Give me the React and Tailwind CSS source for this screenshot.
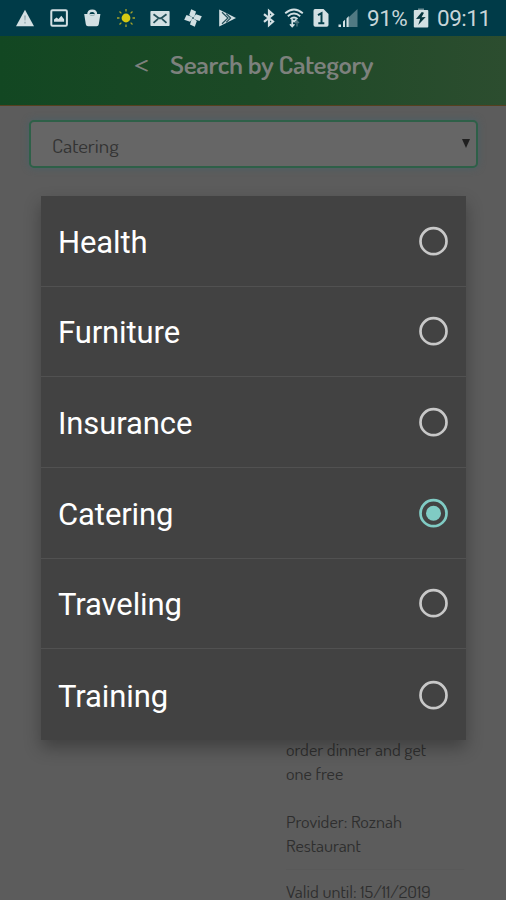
import React from "react";

const ICON = "#d3e0e3";

function Cell({ children }) {
  return (
    <span className="flex w-[33.7px] shrink-0 justify-center">
      <svg viewBox="0 0 20 20" className="h-5 w-5" fill={ICON}>
        {children}
      </svg>
    </span>
  );
}

const BLADE = "M10 10 6.200 7 8.200 1.200 13 3.500 11.600 8Z";

function Notifications() {
  return (
    <div className="flex w-[236px] shrink-0 items-center">
      <Cell>
        <path d="M10 1.8 19 18.2H1Z" />
        <path d="M9 7.5h2l-.4 5H9.4ZM9.2 13.8h1.6v1.7H9.2Z" fill="#9fb4b9" />
      </Cell>
      <Cell>
        <rect x="2.3" y="2.2" width="15.6" height="15.6" rx="1.2" fill="none" stroke={ICON} strokeWidth="2" />
        <path d="M5 13.8v-2.3l2.5-2 2 1.5 2.8-3.2 2.8 3.4v2.6Z" />
      </Cell>
      <Cell>
        <path d="M2.200 6h16.2l-1.6 10.2q-.3 2-2.200 2H6q-1.9 0-2.200-2Z" />
        <path d="M6.400 6.500q0-3.800 3.800-3.800T14 6.500" fill="none" stroke={ICON} strokeWidth="2.400" />
        <path d="M7.500 6.500Q8 7.500 10.200 7.500t2.700-1" fill="none" stroke="#87a0a5" strokeWidth=".8" />
      </Cell>
      <Cell>
        <circle cx="10" cy="10" r="4.4" fill="#d6c811" />
        <path d="M10 1v2.5M10 16.5V19M1 10h2.5M16.5 10H19M3.5 3.5l1.9 1.9M14.6 14.6l1.9 1.9M3.5 16.5l1.9-1.9M14.6 5.4l1.9-1.9" stroke="#a6a52a" strokeWidth="1.3" />
      </Cell>
      <Cell>
        <rect x=".4" y="3" width="19.2" height="15" rx=".8" />
        <path d="m3.500 6.300 4.700 3.500q1.800 1.300 3.600 0l4.700-3.500M3.500 14.800l4.500-4M16.500 14.800l-4.500-4" fill="none" stroke="#24515b" strokeWidth="1.8" />
      </Cell>
      <Cell>
        <path d={BLADE} />
        <path d={BLADE} transform="rotate(90 10 10)" />
        <path d={BLADE} transform="rotate(180 10 10)" />
        <path d={BLADE} transform="rotate(270 10 10)" />
        <circle cx="10" cy="10" r="1.1" fill="#4c717a" />
      </Cell>
      <Cell>
        <path d="M2.2 1.5 19 10 2.2 18.5Z" />
        <path d="M5 4.2 11 10l-6 5.8M9.2 5.6 13.6 10l-4.4 4.4" fill="none" stroke="#214e59" strokeWidth="1.2" />
      </Cell>
    </div>
  );
}

function StatusBar() {
  return (
    <div className="flex h-9 items-center bg-[#003b48] pl-[8px] font-['Roboto',sans-serif] text-[22.5px] leading-9 tracking-[-0.5px] text-[#c8d5d8]">
      <Notifications />
      <svg viewBox="0 0 14 20" className="ml-[18px] h-5 w-3.5 shrink-0">
        <path d="m2 6.200 9 7.300L7 17V3l4 3.500-9 7.300" fill="none" stroke={ICON} strokeWidth="2.2" />
      </svg>
      <svg viewBox="0 0 20 20" className="ml-[8px] h-5 w-5 shrink-0" fill="none" stroke={ICON} strokeWidth="1.8">
        <path d="M1.2 5.2Q10-2.3 18.8 5.2M3.8 8.2Q10 2.8 16.2 8.2M6.5 11Q10 8 13.5 11" />
        <path d="m7.5 11.5 2.5 2 2.5-2" />
        <path d="M8.2 13v5.5M6 16.2l2.2 2.3 2.2-2.3" strokeWidth="1.6" />
        <path d="M13 18.5V13m-2 2 2-2 2 2" stroke="#52777f" strokeWidth="1.3" />
      </svg>
      <svg viewBox="0 0 16 20" className="ml-[9px] h-5 w-4 shrink-0">
        <path d="M2 1h8.5L15.5 6v11q0 1.8-1.8 1.8H2.3Q.5 18.8.5 17V2.700Q.5 1 2 1Z" fill={ICON} />
        <path d="m5 7.2 3.5-2v10.300M5.300 15.200h6" fill="none" stroke="#063f4b" strokeWidth="2" />
      </svg>
      <svg viewBox="0 0 20 20" className="ml-[9px] h-5 w-5 shrink-0">
        <path d="M10.5 9.5 19.5 1v18h-9Z" fill="#517a83" />
        <path d="M.5 16.5H3V19H.5ZM5 13.5l2-1.8V19H5ZM8.500 10.500 10.700 8v11H8.500Z" fill={ICON} />
      </svg>
      <span className="ml-[9px] w-[43px] shrink-0 whitespace-nowrap">91%</span>
      <svg viewBox="0 0 16 22" className="ml-[3px] mb-px h-[22px] w-4 shrink-0">
        <path d="M5 1.500h6V3H5Z" fill="#6e8e95" />
        <rect x=".8" y="3" width="14.5" height="17.5" rx="1" fill={ICON} />
        <path d="M8.800 5 3 12l4.200-.3L5.200 18l7.500-8-4.200.3L11 5.700Z" fill="#07363f" />
      </svg>
      <span className="ml-[8px] whitespace-nowrap">09:11</span>
    </div>
  );
}

const options = ["Health", "Furniture", "Insurance", "Catering", "Traveling", "Training"];

function CategoryMenu() {
  return (
    <div role="radiogroup" className="absolute top-[196px] left-[41px] grid h-[544px] w-[425px] grid-rows-6 bg-[#424242] shadow-[0_8px_16px_0_rgba(0,0,0,0.3)]">
      {options.map((name) => {
        const selected = name === "Catering";
        return (
          <div key={name} role="radio" aria-checked={selected} className="flex items-center justify-between border-b border-[#515151] pr-[17px] pl-[17px] last:border-b-0">
            <span className="pt-[4px] font-['Roboto',sans-serif] text-[31px] leading-9 tracking-[-0.1px] text-white">{name}</span>
            <svg viewBox="0 0 30 30" className="h-[30px] w-[30px]" fill="none">
              <circle cx="14.500" cy="15.200" r="13" stroke={selected ? "#80cbc4" : "#c8c8c8"} strokeWidth="2.7" />
              {selected && <circle cx="14.500" cy="15.200" r="7.500" fill="#80cbc4" />}
            </svg>
          </div>
        );
      })}
    </div>
  );
}

export default function App() {
  return (
    <div className="relative flex h-[900px] w-[506px] flex-col overflow-hidden bg-[#5c5c5c] font-['Dosis','Open_Sans',sans-serif] text-[#2e2e2e]">
      <StatusBar />
      <header className="flex h-[70px] shrink-0 items-start border-b border-[#56401f] bg-linear-to-r from-[#124722] via-[#1c4926] to-[#2c4d2f] pt-[12px] text-[#7d817d]">
        <span className="-mt-px ml-[134px] w-[36px] origin-left scale-x-[1.5] text-[26px] leading-8">&lt;</span>
        <h1 className="origin-left scale-x-[1.095] text-[25px] leading-8 font-semibold tracking-[-0.3px] whitespace-nowrap">Search by Category</h1>
      </header>
      <main className="flex flex-1 flex-col">
        <div className="mt-[14px] ml-[29px] flex h-[48px] w-[449px] shrink-0 items-center justify-between rounded-[5px] border-2 border-[#2e6048] bg-[#666] pr-[6px] pl-[21px] shadow-[0_0_7px_#496067]">
          <span className="origin-left scale-x-[1.17] pt-[4px] text-[18px] leading-6 text-[#333]">Catering</span>
          <svg viewBox="0 0 8 9" className="mb-[2px] h-[9px] w-2" fill="#202020">
            <path d="M0 0h8L4 9Z" />
          </svg>
        </div>
        <div className="mt-[570px] ml-[286px] w-[157px] origin-left scale-x-[1.135] text-[16px] leading-6">
          <p>order dinner and get<br />one free</p>
          <p className="mt-6 h-[60px] border-b border-[#595959]">Provider: Roznah<br />Restaurant</p>
          <p className="mt-[15px] leading-[15px]">Valid until: 15/11/2019</p>
        </div>
      </main>
      <CategoryMenu />
    </div>
  );
}
